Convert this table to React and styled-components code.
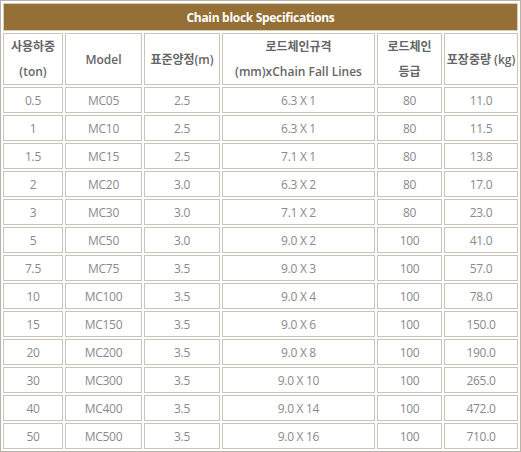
import React from 'react';
import styled, { createGlobalStyle } from 'styled-components';

const GlobalStyle = createGlobalStyle`
  html, body {
    margin: 0;
    padding: 0;
    background: #ffffff;
  }
`;

const cols = [60, 77, 76, 153, 65, 74];

const rows = [
  ['0.5', 'MC05', '2.5', '6.3 X 1', '80', '11.0'],
  ['1', 'MC10', '2.5', '6.3 X 1', '80', '11.5'],
  ['1.5', 'MC15', '2.5', '7.1 X 1', '80', '13.8'],
  ['2', 'MC20', '3.0', '6.3 X 2', '80', '17.0'],
  ['3', 'MC30', '3.0', '7.1 X 2', '80', '23.0'],
  ['5', 'MC50', '3.0', '9.0 X 2', '100', '41.0'],
  ['7.5', 'MC75', '3.5', '9.0 X 3', '100', '57.0'],
  ['10', 'MC100', '3.5', '9.0 X 4', '100', '78.0'],
  ['15', 'MC150', '3.5', '9.0 X 6', '100', '150.0'],
  ['20', 'MC200', '3.5', '9.0 X 8', '100', '190.0'],
  ['30', 'MC300', '3.5', '9.0 X 10', '100', '265.0'],
  ['40', 'MC400', '3.5', '9.0 X 14', '100', '472.0'],
  ['50', 'MC500', '3.5', '9.0 X 16', '100', '710.0'],
];

const App = () => {
  return (
    <>
      <GlobalStyle />
      <SpecTable>
        <colgroup>
          {cols.map((w, i) => (
            <Col key={i} $w={w} />
          ))}
        </colgroup>
        <tbody>
          <tr>
            <TitleCell colSpan={6}>Chain block Specifications</TitleCell>
          </tr>
          <tr>
            <HeadCell>
              사용하중
              <br />
              (ton)
            </HeadCell>
            <HeadCell>Model</HeadCell>
            <HeadCell>표준양정(m)</HeadCell>
            <HeadCell>
              로드체인규격
              <br />
              (mm)xChain Fall Lines
            </HeadCell>
            <HeadCell>
              로드체인
              <br />
              등급
            </HeadCell>
            <HeadCell>포장중량 (kg)</HeadCell>
          </tr>
          {rows.map(r => (
            <tr key={r[1]}>
              {r.map((v, i) => (
                <DataCell key={i}>{v}</DataCell>
              ))}
            </tr>
          ))}
        </tbody>
      </SpecTable>
    </>
  );
};

const SpecTable = styled.table`
  width: 521px;
  table-layout: fixed;
  border-collapse: separate;
  border-spacing: 2px;
  border: 1px solid #b9b3a8;
  font-family: 'Open Sans', 'Noto Sans CJK KR', sans-serif;
  font-size: 12px;
  text-align: center;
`;

const Col = styled.col`
  width: ${p => p.$w}px;
`;

const Cell = styled.td`
  padding: 0;
  border: 1px solid #cbc4b8;
  vertical-align: middle;
  white-space: nowrap;
  overflow: hidden;
`;

const TitleCell = styled(Cell)`
  height: 26px;
  background: #946f36;
  border-color: #d6cdbd;
  color: #ffffff;
  font-weight: 700;
  font-size: 12px;
  letter-spacing: -0.3px;
`;

const HeadCell = styled(Cell)`
  height: 50px;
  line-height: 25px;
  color: #666666;
  font-weight: 600;
  font-size: 12px;
  letter-spacing: 0;
`;

const DataCell = styled(Cell)`
  height: 24px;
  color: #8a8a8a;
  font-weight: 400;
  font-size: 12px;
  letter-spacing: -0.3px;
`;

export default App;
